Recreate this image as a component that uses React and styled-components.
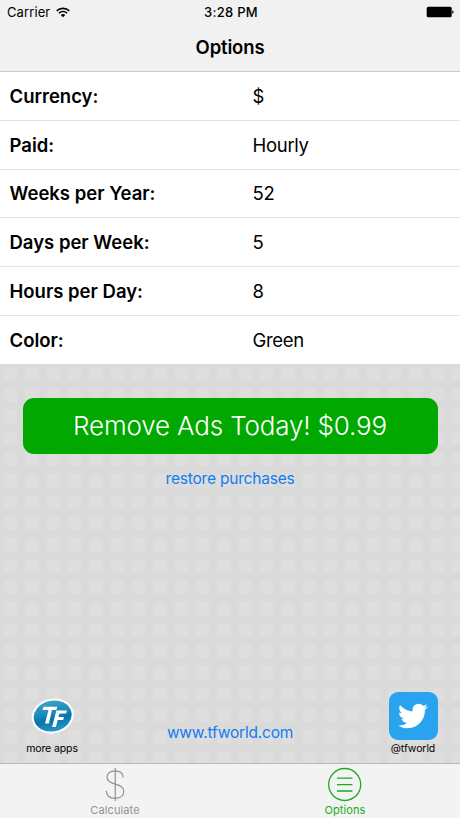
import React from 'react';
import styled, { createGlobalStyle, css } from 'styled-components';

const colors = {
  green: '#00a800',
  blue: '#117cf0',
  twitter: '#2aa3ef',
  bar: '#f1f1f1',
  inactive: '#929292',
};

const OPTIONS = [
  { label: 'Currency:', value: '$' },
  { label: 'Paid:', value: 'Hourly' },
  { label: 'Weeks per Year:', value: '52' },
  { label: 'Days per Week:', value: '5' },
  { label: 'Hours per Day:', value: '8' },
  { label: 'Color:', value: 'Green' },
];

const GlobalStyle = createGlobalStyle`
  * {
    box-sizing: border-box;
  }

  body {
    margin: 0;
    font-family: Inter, "Liberation Sans", sans-serif;
    color: #000;
  }
`;

const Screen = styled.div`
  display: flex;
  flex-direction: column;
  width: 460px;
  height: 818px;
  overflow: hidden;
`;

const Header = styled.header`
  height: 72px;
  background: ${colors.bar};
  border-bottom: 1px solid #c8c8c8;
`;

const StatusBar = styled.div`
  display: grid;
  grid-template-columns: 1fr auto 1fr;
  align-items: center;
  height: 24px;
  padding: 0 6px 0 7px;
  font-size: 13px;
`;

const Carrier = styled.div`
  display: flex;
  align-items: center;
  gap: 6px;
  letter-spacing: 0.1px;
`;

const Time = styled.div`
  padding-left: 1px;
  font-weight: 500;
  letter-spacing: 0.3px;
`;

const BatteryIcon = styled.svg`
  justify-self: end;
`;

const Title = styled.h1`
  margin: 0;
  font-size: 18.5px;
  font-weight: 600;
  line-height: 46px;
  letter-spacing: -0.15px;
  text-align: center;
`;

const OptionList = styled.div`
  background: #fff;
`;

const OptionRow = styled.div`
  display: grid;
  grid-template-columns: 243px 1fr;
  align-items: center;
  height: 48.8px;
  padding: 0 9.5px;
  border-bottom: 1px solid #e3e3e3;
  font-size: 18.5px;
  letter-spacing: -0.3px;

  &:last-child {
    height: 48px;
    border-bottom: 0;
  }
`;

const OptionLabel = styled.span`
  font-weight: 600;
  letter-spacing: 0;
`;

const Content = styled.main`
  display: flex;
  flex: 1;
  flex-direction: column;
  align-items: center;
  padding: 34px 22px 0;
  background-color: #dadada;
  background-image: url("data:image/svg+xml,%3Csvg xmlns='http://www.w3.org/2000/svg' width='64' height='64' viewBox='0 0 3 3'%3E%3Cg fill='%23dedede'%3E%3Cpath id='r' d='M.19.16h.62v.62h-.62zM1.19.16h.62v.62h-.62zM2.19.16h.62v.62h-.62zM.19 1.16h.62v.62h-.62zM1.19 1.16h.62v.62h-.62zM2.19 1.16h.62v.62h-.62zM.19 2.16h.62v.62h-.62zM1.19 2.16h.62v.62h-.62zM2.19 2.16h.62v.62h-.62z'/%3E%3C/g%3E%3C/svg%3E");
  background-size: 64px 64px;
`;

const RemoveAdsButton = styled.button`
  width: 415px;
  height: 56px;
  padding: 0;
  border: 0;
  border-radius: 11px;
  background: ${colors.green};
  color: #fff;
  font-family: inherit;
  font-size: 26px;
  font-weight: 300;
  letter-spacing: -0.17px;
`;

const Link = styled.a`
  color: ${colors.blue};
  font-size: 15.5px;
  line-height: 20px;
  letter-spacing: -0.2px;
`;

const RestoreLink = styled(Link)`
  margin-top: 15px;
`;

const Footer = styled.div`
  display: grid;
  grid-template-columns: 60px 1fr 60px;
  width: 100%;
  height: 71px;
  margin-top: auto;
`;

const AppLink = styled.div`
  display: flex;
  flex-direction: column;
  align-items: center;
  font-size: 10.5px;
  line-height: 14px;
  letter-spacing: ${({ $tracking }) => $tracking || 0};
  white-space: nowrap;
`;

const TwitterLink = styled(AppLink)`
  margin: 0 -5px 0 5px;
`;

const SiteLink = styled(Link)`
  margin-top: 31px;
  text-align: center;
`;

const IconSlot = styled.div`
  display: flex;
  align-items: center;
  justify-content: center;
  width: 49px;
  height: 48px;
  margin-bottom: 2px;
`;

const TwitterTile = styled(IconSlot)`
  border-radius: 9px;
  background: ${colors.twitter};
`;

const TabBar = styled.nav`
  display: grid;
  grid-template-columns: 1fr 1fr;
  height: 55px;
  border-top: 1px solid #b8b8b8;
  background: #f3f3f3;
`;

const Tab = styled.div`
  display: flex;
  flex-direction: column;
  align-items: center;
  padding-top: 3px;
  color: ${colors.inactive};
  font-size: 11px;
  line-height: 14px;
  letter-spacing: 0.1px;

  svg {
    margin-bottom: 1px;
  }

  ${({ $active }) => $active && css`
    color: #1cab1c;
  `}
`;

const WifiIcon = () => (
  <svg width="14" height="11" viewBox="0 0 14 11" fill="none" stroke="#000" strokeWidth="1.6">
    <path d="M.7 3.9a9 9 0 0 1 12.6 0M2.9 6.2a5.8 5.8 0 0 1 8.2 0" />
    <path d="M4.7 8a3.3 3.3 0 0 1 4.6 0L7 10.3z" fill="#000" stroke="none" />
  </svg>
);

const Battery = () => (
  <BatteryIcon width="28" height="12" viewBox="0 0 28 12">
    <rect x=".7" y=".7" width="25" height="10.6" rx="1.5" />
    <path d="M26.3 4.2q1.3.4 1.3 1.8t-1.3 1.8z" />
  </BatteryIcon>
);

const TFLogo = () => (
  <svg width="43" height="38" viewBox="0 0 43 38">
    <defs>
      <linearGradient id="tf-fill" x1="0" y1="0" x2="0" y2="1">
        <stop offset="0" stopColor="#3fa5ca" />
        <stop offset=".45" stopColor="#1687b9" />
        <stop offset=".6" stopColor="#0873a7" />
        <stop offset="1" stopColor="#249cca" />
      </linearGradient>
    </defs>
    <ellipse cx="21.7" cy="19" rx="20.1" ry="16.4" transform="rotate(-12 21.7 19)" fill="url(#tf-fill)" stroke="#fff" strokeWidth="2" />
    <g fill="#fff">
      <path d="M12.6 9.8H26.3L25.3 13H20.9L17.9 26.5H14L17.5 13H11.5z" />
      <path d="M25.4 13.6H36L35 16.6H28.5L27.4 20H33L32.1 22.9H26.7L24.9 30H21.1z" />
    </g>
  </svg>
);

const TwitterIcon = () => (
  <svg width="30" height="30" viewBox="0 0 24 24" fill="#fff">
    <path d="M23.953 4.57a10 10 0 0 1-2.825.775 4.958 4.958 0 0 0 2.163-2.723c-.951.555-2.005.959-3.127 1.184a4.92 4.92 0 0 0-8.384 4.482C7.69 8.095 4.067 6.13 1.64 3.162a4.822 4.822 0 0 0-.666 2.475c0 1.71.87 3.213 2.188 4.096a4.904 4.904 0 0 1-2.228-.616v.06a4.923 4.923 0 0 0 3.946 4.827 4.996 4.996 0 0 1-2.212.085 4.936 4.936 0 0 0 4.604 3.417 9.867 9.867 0 0 1-6.102 2.105c-.39 0-.779-.023-1.17-.067a13.995 13.995 0 0 0 7.557 2.209c9.053 0 13.998-7.496 13.998-13.985 0-.21 0-.42-.015-.63A9.935 9.935 0 0 0 24 4.59z" />
  </svg>
);

const DollarIcon = () => (
  <svg width="34" height="35" viewBox="0 0 34 35" fill="none" stroke="currentColor" strokeWidth="1.2">
    <path d="M17.3 1v33M25.3 10.5C25 6 21.5 3.8 17 3.8s-8 2.4-8 6.3c0 9 16.8 5.1 16.8 14.4 0 4.3-3.8 6.8-8.8 6.8s-8.5-2.5-8.8-7.4" />
  </svg>
);

const MenuIcon = () => (
  <svg width="34" height="35" viewBox="0 0 34 35" fill="none" stroke="currentColor" strokeWidth="1.3">
    <circle cx="16.7" cy="17.5" r="16" />
    <path d="M9 11.2h15.4M9 17.6h15.4M9 24h15.4" />
  </svg>
);

const App = () => (
  <>
    <GlobalStyle />
    <Screen>
      <Header>
        <StatusBar>
          <Carrier>Carrier <WifiIcon /></Carrier>
          <Time>3:28 PM</Time>
          <Battery />
        </StatusBar>
        <Title>Options</Title>
      </Header>
      <OptionList>
        {OPTIONS.map(({ label, value }) => (
          <OptionRow key={label}>
            <OptionLabel>{label}</OptionLabel>
            <span>{value}</span>
          </OptionRow>
        ))}
      </OptionList>
      <Content>
        <RemoveAdsButton>Remove Ads Today! $0.99</RemoveAdsButton>
        <RestoreLink>restore purchases</RestoreLink>
        <Footer>
          <AppLink $tracking="-0.1px">
            <IconSlot><TFLogo /></IconSlot>
            more apps
          </AppLink>
          <SiteLink>www.tfworld.com</SiteLink>
          <TwitterLink $tracking="-0.1px">
            <TwitterTile><TwitterIcon /></TwitterTile>
            @tfworld
          </TwitterLink>
        </Footer>
      </Content>
      <TabBar>
        <Tab>
          <DollarIcon />
          Calculate
        </Tab>
        <Tab $active>
          <MenuIcon />
          Options
        </Tab>
      </TabBar>
    </Screen>
  </>
);

export default App;
